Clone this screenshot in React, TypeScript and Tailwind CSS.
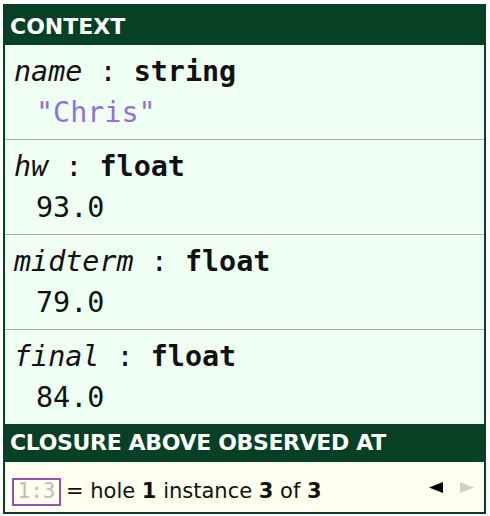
import React from 'react';

type Binding = {
  name: string;
  type: string;
  value: string;
  isString?: boolean;
};

const bindings: Binding[] = [
  { name: 'name', type: 'string', value: '"Chris"', isString: true },
  { name: 'hw', type: 'float', value: '93.0' },
  { name: 'midterm', type: 'float', value: '79.0' },
  { name: 'final', type: 'float', value: '84.0' },
];

const mono = { fontFamily: '"DejaVu Sans Mono", monospace' };
const sans = { fontFamily: '"DejaVu Sans", sans-serif' };

export default function App() {
  return (
    <div className="bg-white min-h-screen pl-[3px] pt-[4px]">
      <div className="w-[483px] border-2 border-[#074025] flex flex-col">
        <div
          className="h-[39px] bg-[#074025] text-white font-bold text-[22px] leading-[39px] pl-[5px] pt-[1px]"
          style={sans}
        >
          CONTEXT
        </div>

        {bindings.map((b, i) => (
          <div
            key={b.name}
            className={
              'bg-[#effff3] px-[9px] pt-[6px] pb-[6px] text-[28.4px] leading-[41px] text-[#111]' +
              (i < bindings.length - 1 ? ' border-b border-[#aaaaaa]' : '')
            }
            style={mono}
          >
            <div className="whitespace-pre">
              <span className="italic">{b.name}</span>
              <span> : </span>
              <span className="font-bold">{b.type}</span>
            </div>
            <div className={'pl-[22px] whitespace-pre ' + (b.isString ? 'text-[#9370db]' : '')}>
              {b.value}
            </div>
          </div>
        ))}

        <div
          className="h-[38px] bg-[#074025] text-white font-bold text-[22px] leading-[38px] pl-[5px] tracking-[-0.35px]"
          style={sans}
        >
          CLOSURE ABOVE OBSERVED AT
        </div>

        <div className="h-[50px] bg-[#fffff0] flex items-center pl-[7px] pr-[10px] pt-[12px] pb-[2px]">
          <div
            className="w-[49px] h-[28px] border-2 border-[#9c4fb0] flex items-center justify-center text-[21px] text-[#bdbdbd]"
            style={mono}
          >
            1:3
          </div>
          <div className="ml-[5px] text-[21px] text-[#111]" style={sans}>
            = hole <span className="font-bold">1</span> instance <span className="font-bold">3</span> of{' '}
            <span className="font-bold">3</span>
          </div>
          <div className="ml-auto flex items-center gap-[17px] mb-[10px]">
            <svg width="14" height="11" viewBox="0 0 14 11">
              <polygon points="0,5.5 14,0 14,11" fill="#000" />
            </svg>
            <svg width="14" height="11" viewBox="0 0 14 11">
              <polygon points="14,5.5 0,0 0,11" fill="#d0d0c8" />
            </svg>
          </div>
        </div>
      </div>
    </div>
  );
}
